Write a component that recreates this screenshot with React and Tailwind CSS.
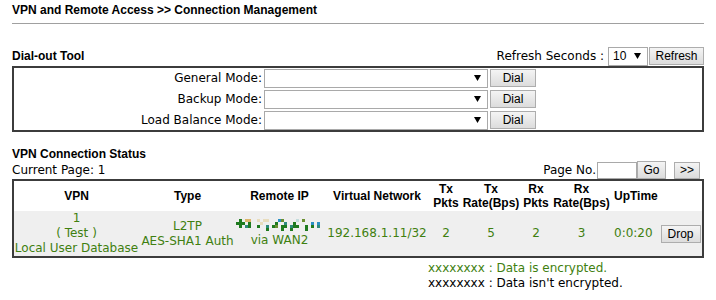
import React from 'react';

const mosaic = [
  '.g.tt..b.bb...uo....p.o......',
  'ggg.g...b....g..c..g.....u.u.',
  '.g.cg..g..c.go.gg.cgg..g.g.c.',
  '..........g....g..g....g.....',
];

const cellColor = {
  g: '#1f7a1f',
  o: '#6a8f30',
  t: '#dcb66c',
  b: '#e8dcbc',
  u: '#2b8fc4',
  c: '#2e8a7c',
  p: '#c3dcdc',
};

const Arrow = () => (
  <svg width="7" height="6" viewBox="0 0 7 6" className="shrink-0">
    <polygon points="0,0 7,0 3.5,6" fill="#000" />
  </svg>
);

const Select = ({ width, value }) => (
  <div
    className={`flex items-center justify-between border border-[#a9a9a9] bg-white h-[19px] pl-[4px] pr-[6px] ${width}`}
  >
    <span className="font-['Liberation_Sans'] text-[12px]">{value}</span>
    <Arrow />
  </div>
);

const Button = ({ children, className }) => (
  <button
    className={`border border-[#adadad] bg-linear-to-b from-[#f4f4f4] to-[#dcdcdc] font-['Liberation_Sans'] text-[12px] leading-none text-black ${className}`}
  >
    {children}
  </button>
);

const App = () => {
  const modes = ['General Mode:', 'Backup Mode:', 'Load Balance Mode:'];
  const green = 'text-[#3f7f10]';

  return (
    <div className="w-[716px] h-[300px] bg-white px-[12px] font-['DejaVu_Sans'] text-[12px] text-black overflow-hidden">
      {/* Title */}
      <div className="pt-[3px] leading-[14px] font-['Liberation_Sans'] font-bold text-[12px]">
        VPN and Remote Access &gt;&gt; Connection Management
      </div>
      <div className="mt-[6px] h-px bg-[#a0a0a0]" />

      {/* Dial-out Tool */}
      <div className="mt-[22px] flex items-center justify-between h-[20px]">
        <span className="font-['Liberation_Sans'] font-bold text-[12px]">Dial-out Tool</span>
        <div className="flex items-center">
          <span className="mr-[4px]">Refresh Seconds :</span>
          <Select width="w-[40px]" value="10" />
          <Button className="w-[55px] h-[18px] ml-[1px]">Refresh</Button>
        </div>
      </div>
      <div className="border-2 border-[#3c3c3c] flex flex-col gap-[1px] py-[0px]">
        {modes.map((m) => (
          <div key={m} className="flex items-center h-[20px]">
            <span className="w-[250px] text-right pr-[2px]">{m}</span>
            <Select width="w-[224px]" />
            <Button className="w-[46px] h-[18px] ml-[2px]">Dial</Button>
          </div>
        ))}
      </div>

      {/* VPN Connection Status */}
      <div className="mt-[15px] leading-[14px] font-['Liberation_Sans'] font-bold text-[12px]">
        VPN Connection Status
      </div>
      <div className="flex items-center justify-between h-[18px]">
        <span>Current Page: 1</span>
        <div className="flex items-center pr-[4px]">
          <span className="mr-[1px]">Page No.</span>
          <div className="w-[40px] h-[17px] border border-[#a9a9a9] bg-white" />
          <Button className="w-[29px] h-[18px]">Go</Button>
          <Button className="w-[26px] h-[17px] ml-[8px] text-[9px]">&gt;&gt;</Button>
        </div>
      </div>
      <div className="border-2 border-[#3c3c3c]">
        <table className="w-full table-fixed border-collapse">
          <colgroup>
            <col className="w-[125px]" />
            <col className="w-[97px]" />
            <col className="w-[87px]" />
            <col className="w-[108px]" />
            <col className="w-[30px]" />
            <col className="w-[60px]" />
            <col className="w-[30px]" />
            <col className="w-[61px]" />
            <col className="w-[47px]" />
            <col className="w-[43px]" />
          </colgroup>
          <thead>
            <tr className="h-[30px] font-['Liberation_Sans'] font-bold text-[12px] leading-[14px]">
              <th>VPN</th>
              <th>Type</th>
              <th>Remote IP</th>
              <th>Virtual Network</th>
              <th>Tx<br />Pkts</th>
              <th>Tx<br />Rate(Bps)</th>
              <th>Rx<br />Pkts</th>
              <th>Rx<br />Rate(Bps)</th>
              <th className="text-left pl-[2px]">UpTime</th>
              <th />
            </tr>
          </thead>
          <tbody>
            <tr className={`h-[45px] bg-[#efefef] leading-[15px] text-center ${green}`}>
              <td className="whitespace-nowrap">1<br />( Test )<br />Local User Database</td>
              <td className="whitespace-nowrap">L2TP<br />AES-SHA1 Auth</td>
              <td>
                <div className="flex flex-col items-center">
                  <svg width="87" height="12" viewBox="0 0 87 12">
                    {mosaic.map((row, y) =>
                      row.split('').map((ch, x) =>
                        ch === '.' ? null : (
                          <rect key={`${x}-${y}`} x={x * 3} y={y * 3} width="3" height="3" fill={cellColor[ch]} />
                        )
                      )
                    )}
                  </svg>
                  <span className="mt-[2px]">via WAN2</span>
                </div>
              </td>
              <td className="whitespace-nowrap">192.168.1.11/32</td>
              <td>2</td>
              <td>5</td>
              <td>2</td>
              <td>3</td>
              <td className="text-left pl-[2px]">0:0:20</td>
              <td>
                <Button className="w-[40px] h-[18px]">Drop</Button>
              </td>
            </tr>
          </tbody>
        </table>
      </div>

      {/* Legend */}
      <div className="pt-[3px] pl-[416px] leading-[15px]">
        <div className={green}>xxxxxxxx : Data is encrypted.</div>
        <div>xxxxxxxx : Data isn't encrypted.</div>
      </div>
    </div>
  );
};

export default App;
